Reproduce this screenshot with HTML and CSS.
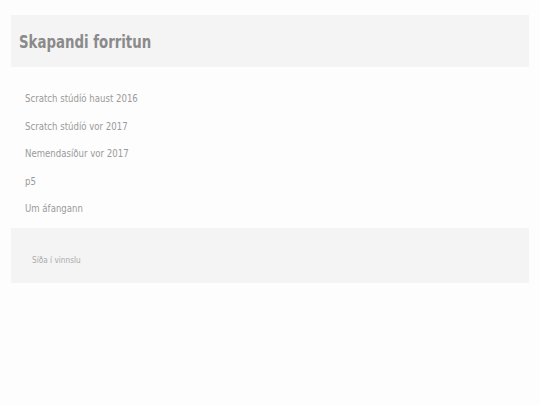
FILE: index.html
```html
<!DOCTYPE html>
<html>
<head>
<meta charset="utf-8">
<link rel="stylesheet" href="styles.css">
</head>
<body>
<div class="page">
  <header class="header">
    <h1 class="title">Skapandi forritun</h1>
  </header>
  <nav class="nav">
    <a class="nav-link" href="#">Scratch stúdíó haust 2016</a>
    <a class="nav-link" href="#">Scratch stúdíó vor 2017</a>
    <a class="nav-link" href="#">Nemendasíður vor 2017</a>
    <a class="nav-link" href="#">p5</a>
    <a class="nav-link" href="#">Um áfangann</a>
  </nav>
  <footer class="footer">
    <span class="footer-text">Síða í vinnslu</span>
  </footer>
</div>
</body>
</html>
```
FILE: styles.css
```css
html, body {
  margin: 0;
  padding: 0;
  background: #fdfdfd;
}
body {
  font-family: "DejaVu Sans", sans-serif;
}
.page {
  padding: 15px 11px;
}
.header {
  background: #f4f4f4;
  height: 52px;
  display: flex;
  align-items: center;
  padding-left: 8px;
}
.title {
  margin: 0;
  font-size: 18px;
  font-weight: bold;
  color: #8a8a8a;
  transform: scaleX(0.74);
  transform-origin: left center;
}
.nav {
  display: flex;
  flex-direction: column;
  align-items: flex-start;
  padding: 18px 0 5px 14px;
}
.nav-link {
  display: block;
  font-size: 11px;
  line-height: 27.5px;
  color: #9a9a9a;
  text-decoration: none;
  transform: scaleX(0.78);
  transform-origin: left center;
}
.footer {
  background: #f4f4f4;
  height: 55px;
  display: flex;
  align-items: center;
  padding-left: 21px;
}
.footer-text {
  font-size: 8px;
  color: #aaaaaa;
  padding-top: 10px;
  transform: scaleX(0.92);
  transform-origin: left center;
}
```
